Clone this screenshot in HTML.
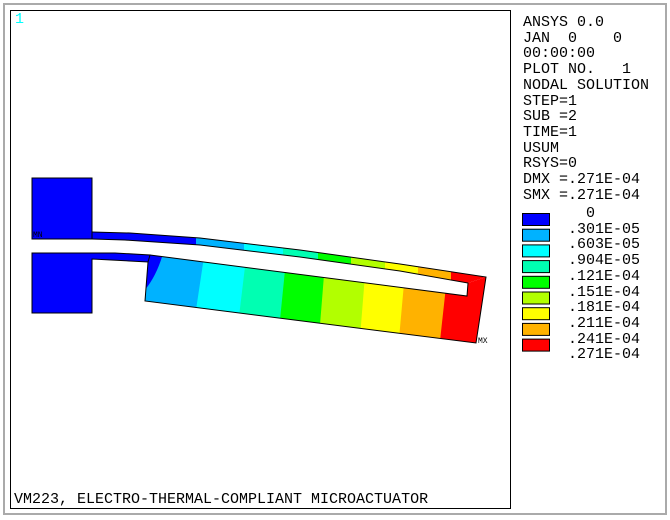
<!DOCTYPE html>
<html><head><style>
body{margin:0;width:670px;height:520px;background:#fff;position:relative;overflow:hidden;font-family:"Liberation Mono",monospace;}
.t{position:absolute;font-size:15px;line-height:15.7px;color:#000;white-space:pre;}
</style></head><body>
<div style="position:absolute;left:3px;top:3px;width:660px;height:508px;border:2px solid #aaa;"></div>
<div style="position:absolute;left:10px;top:10px;width:499px;height:497px;border:1px solid #000;"></div>
<div class="t" style="left:15px;top:12px;color:#0ff;">1</div>
<div class="t" style="left:523px;top:15px;">ANSYS 0.0
JAN  0    0
00:00:00
PLOT NO.   1
NODAL SOLUTION
STEP=1
SUB =2
TIME=1
USUM
RSYS=0
DMX =.271E-04
SMX =.271E-04</div>
<div class="t" style="left:568px;top:206px;">  0
.301E-05
.603E-05
.904E-05
.121E-04
.151E-04
.181E-04
.211E-04
.241E-04
.271E-04</div>
<svg width="670" height="520" style="position:absolute;left:0;top:0">
<g stroke="#000" stroke-width="1">
<rect x="522.5" y="213.5" width="27" height="12" fill="#0000ff"/>
<rect x="522.5" y="229.2" width="27" height="12" fill="#00b2ff"/>
<rect x="522.5" y="244.9" width="27" height="12" fill="#00ffff"/>
<rect x="522.5" y="260.6" width="27" height="12" fill="#00ffb2"/>
<rect x="522.5" y="276.3" width="27" height="12" fill="#00ff00"/>
<rect x="522.5" y="292" width="27" height="12" fill="#b2ff00"/>
<rect x="522.5" y="307.7" width="27" height="12" fill="#ffff00"/>
<rect x="522.5" y="323.4" width="27" height="12" fill="#ffb200"/>
<rect x="522.5" y="339.1" width="27" height="12" fill="#ff0000"/>
</g>
<defs>
<clipPath id="arm"><polygon points="92,232 130,233 200,238 300,250 400,264 486,277 468,283 400,271 300,257 200,245 125,240 92,239"/></clipPath>
<clipPath id="beam"><polygon points="148,262 150,255 467,296 468,283 486,277 476,343 145,301"/></clipPath>
</defs>
<g clip-path="url(#arm)">
<rect x="80" y="220" width="116" height="80" fill="#0000ff"/>
<rect x="196" y="220" width="48" height="80" fill="#00b2ff"/>
<rect x="244" y="220" width="39" height="80" fill="#00ffff"/>
<rect x="283" y="220" width="35" height="80" fill="#00ffb2"/>
<rect x="318" y="220" width="33" height="80" fill="#00ff00"/>
<rect x="351" y="220" width="34" height="80" fill="#b2ff00"/>
<rect x="385" y="220" width="33" height="80" fill="#ffff00"/>
<rect x="418" y="220" width="33" height="80" fill="#ffb200"/>
<rect x="451" y="220" width="50" height="80" fill="#ff0000"/>
</g>
<g clip-path="url(#beam)">
<rect x="140" y="250" width="360" height="100" fill="#ff0000"/>
<polygon points="140,250 450,250 439,350 140,350" fill="#ffb200"/>
<polygon points="140,250 407,250 398,350 140,350" fill="#ffff00"/>
<polygon points="140,250 367,250 359,350 140,350" fill="#b2ff00"/>
<polygon points="140,250 326,250 318,350 140,350" fill="#00ff00"/>
<polygon points="140,250 287,250 277,350 140,350" fill="#00ffb2"/>
<polygon points="140,250 247,250 235,350 140,350" fill="#00ffff"/>
<polygon points="140,250 205,250 190,350 140,350" fill="#00b2ff"/>
<path d="M140,250 L164,250 Q156,280 140,295 Z" fill="#0000ff"/>
</g>
<g fill="#0000ff" stroke="#000" stroke-width="1">
<polygon points="32,178 92,178 92,232 92,239 32,239"/>
<polygon points="32,253 115,253 150,255 148,262 92,259 92,313 32,313"/>
</g>
<g fill="none" stroke="#000" stroke-width="1">
<polyline points="92,232 130,233 200,238 300,250 400,264 486,277 476,343 145,301 148,262"/>
<polyline points="92,239 125,240 200,245 300,257 400,271 468,283 467,296 150,255"/>
</g>
<text x="33" y="237" font-family="Liberation Mono,monospace" font-size="8" fill="#000">MN</text>
<text x="478" y="343" font-family="Liberation Mono,monospace" font-size="8" fill="#000">MX</text>
</svg>
<div class="t" style="left:14px;top:492px;">VM223, ELECTRO-THERMAL-COMPLIANT MICROACTUATOR</div>
</body></html>
